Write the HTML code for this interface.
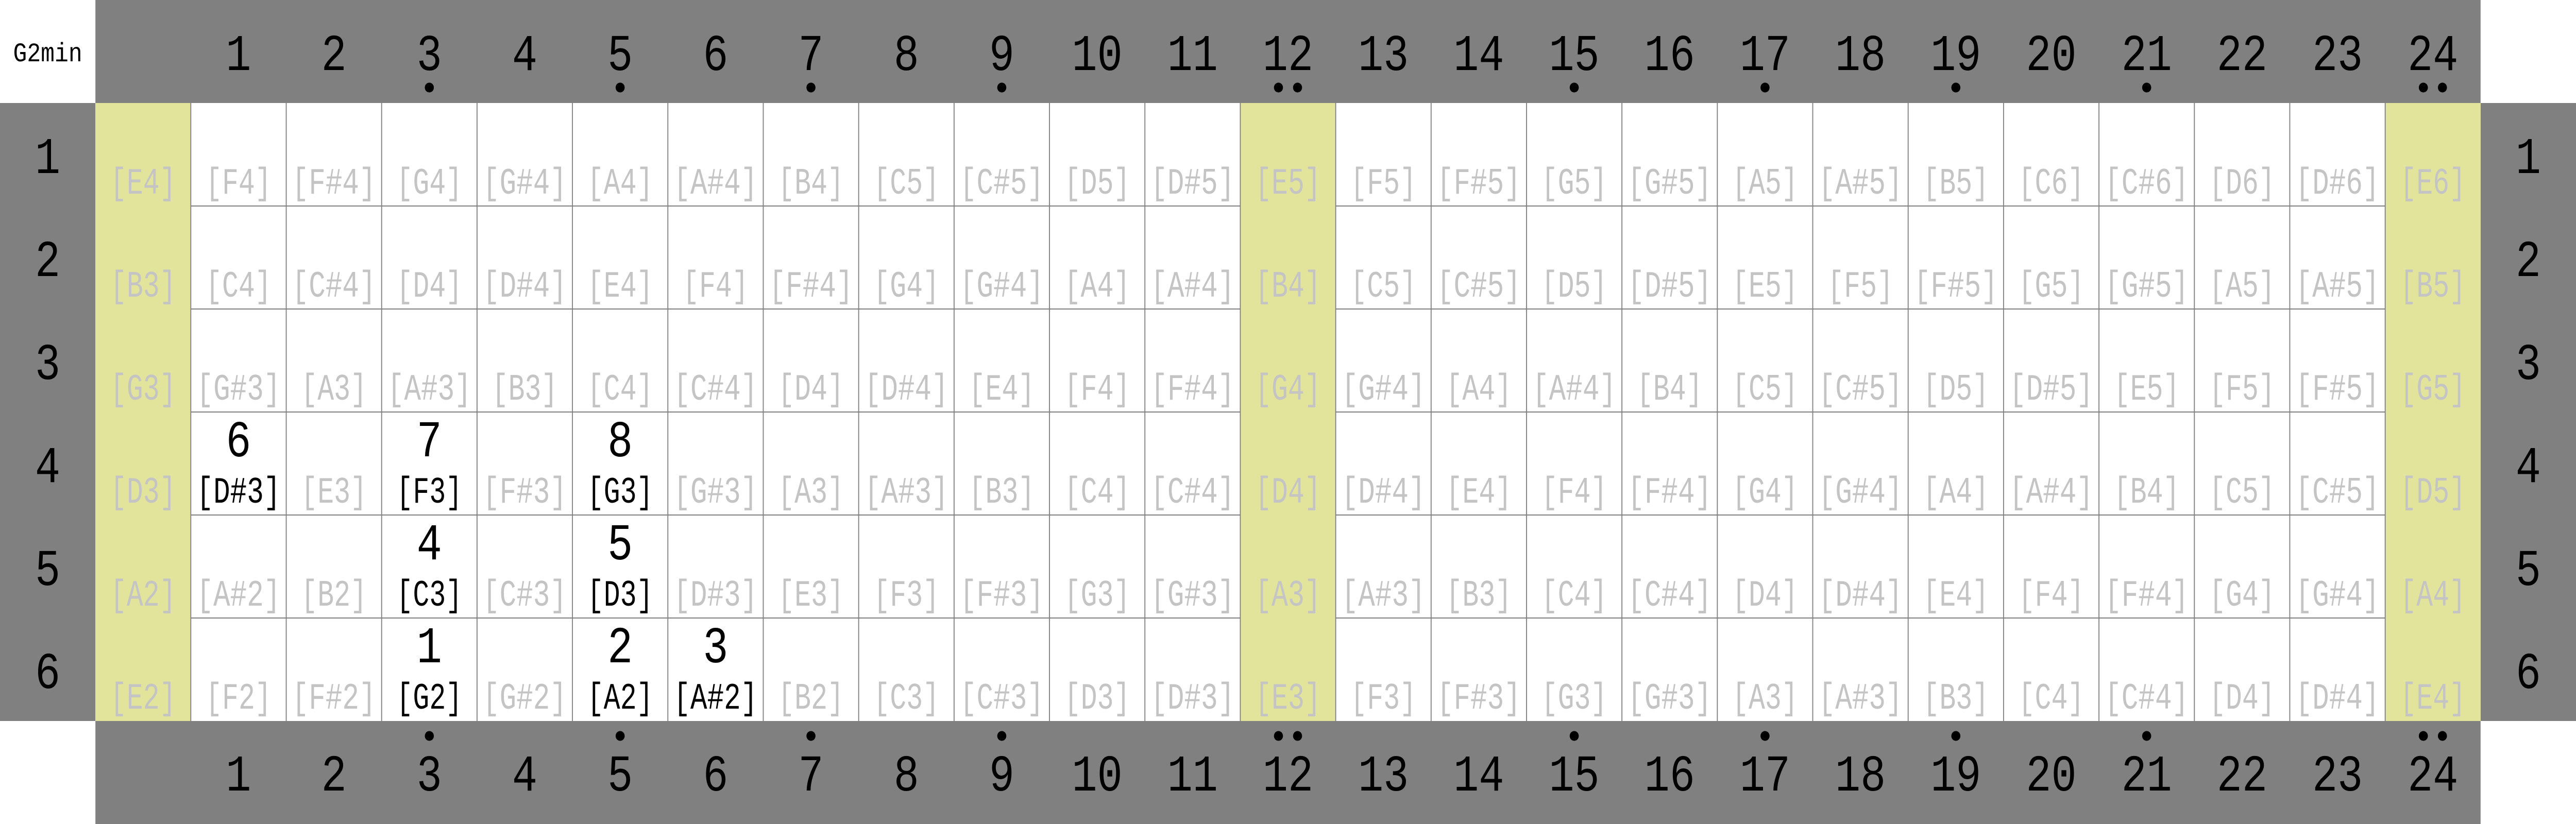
<!DOCTYPE html>
<html><head><meta charset="utf-8"><style>
html,body{margin:0;padding:0;width:100%;height:100%;overflow:hidden;background:#fff}
svg{display:block;width:100vw;height:100vh}
text{font-family:"Liberation Mono",monospace;text-anchor:middle}
.n{font-size:72px;fill:#c4c4c4}
.h{font-size:72px;fill:#000}
.b{font-size:100px;fill:#000}
.t{font-size:100px;fill:#000}
</style></head><body>
<svg viewBox="0 0 5400 1600" preserveAspectRatio="none" xmlns="http://www.w3.org/2000/svg">
<rect x="0" y="0" width="5400" height="1600" fill="#fff"/>
<rect x="200" y="0" width="5000" height="200" fill="#808080"/>
<rect x="200" y="1400" width="5000" height="200" fill="#808080"/>
<rect x="0" y="200" width="200" height="1200" fill="#808080"/>
<rect x="5200" y="200" width="200" height="1200" fill="#808080"/>
<rect x="200" y="200" width="200" height="1200" fill="#e3e49b"/>
<rect x="2600" y="200" width="200" height="1200" fill="#e3e49b"/>
<rect x="5000" y="200" width="200" height="1200" fill="#e3e49b"/>
<g stroke="#808080" stroke-width="2">
<path d="M400 400H2600M400 600H2600M400 800H2600M400 1000H2600M400 1200H2600M2800 400H5000M2800 600H5000M2800 800H5000M2800 1000H5000M2800 1200H5000"/>
<path d="M400 200V1400M600 200V1400M800 200V1400M1000 200V1400M1200 200V1400M1400 200V1400M1600 200V1400M1800 200V1400M2000 200V1400M2200 200V1400M2400 200V1400M2600 200V1400M2800 200V1400M3000 200V1400M3200 200V1400M3400 200V1400M3600 200V1400M3800 200V1400M4000 200V1400M4200 200V1400M4400 200V1400M4600 200V1400M4800 200V1400M5000 200V1400"/>
</g>
<text x="100" y="119" style="font-size:52px" textLength="145" lengthAdjust="spacingAndGlyphs">G2min</text>
<!-- top numbers -->
<g class="t">
<text class="t" x="500" y="136" textLength="53" lengthAdjust="spacingAndGlyphs">1</text>
<text class="t" x="700" y="136" textLength="53" lengthAdjust="spacingAndGlyphs">2</text>
<text class="t" x="900" y="136" textLength="53" lengthAdjust="spacingAndGlyphs">3</text>
<text class="t" x="1100" y="136" textLength="53" lengthAdjust="spacingAndGlyphs">4</text>
<text class="t" x="1300" y="136" textLength="53" lengthAdjust="spacingAndGlyphs">5</text>
<text class="t" x="1500" y="136" textLength="53" lengthAdjust="spacingAndGlyphs">6</text>
<text class="t" x="1700" y="136" textLength="53" lengthAdjust="spacingAndGlyphs">7</text>
<text class="t" x="1900" y="136" textLength="53" lengthAdjust="spacingAndGlyphs">8</text>
<text class="t" x="2100" y="136" textLength="53" lengthAdjust="spacingAndGlyphs">9</text>
<text class="t" x="2300" y="136" textLength="106" lengthAdjust="spacingAndGlyphs">10</text>
<text class="t" x="2500" y="136" textLength="106" lengthAdjust="spacingAndGlyphs">11</text>
<text class="t" x="2700" y="136" textLength="106" lengthAdjust="spacingAndGlyphs">12</text>
<text class="t" x="2900" y="136" textLength="106" lengthAdjust="spacingAndGlyphs">13</text>
<text class="t" x="3100" y="136" textLength="106" lengthAdjust="spacingAndGlyphs">14</text>
<text class="t" x="3300" y="136" textLength="106" lengthAdjust="spacingAndGlyphs">15</text>
<text class="t" x="3500" y="136" textLength="106" lengthAdjust="spacingAndGlyphs">16</text>
<text class="t" x="3700" y="136" textLength="106" lengthAdjust="spacingAndGlyphs">17</text>
<text class="t" x="3900" y="136" textLength="106" lengthAdjust="spacingAndGlyphs">18</text>
<text class="t" x="4100" y="136" textLength="106" lengthAdjust="spacingAndGlyphs">19</text>
<text class="t" x="4300" y="136" textLength="106" lengthAdjust="spacingAndGlyphs">20</text>
<text class="t" x="4500" y="136" textLength="106" lengthAdjust="spacingAndGlyphs">21</text>
<text class="t" x="4700" y="136" textLength="106" lengthAdjust="spacingAndGlyphs">22</text>
<text class="t" x="4900" y="136" textLength="106" lengthAdjust="spacingAndGlyphs">23</text>
<text class="t" x="5100" y="136" textLength="106" lengthAdjust="spacingAndGlyphs">24</text>
</g>
<!-- bottom numbers -->
<text class="t" x="500" y="1535" textLength="53" lengthAdjust="spacingAndGlyphs">1</text>
<text class="t" x="700" y="1535" textLength="53" lengthAdjust="spacingAndGlyphs">2</text>
<text class="t" x="900" y="1535" textLength="53" lengthAdjust="spacingAndGlyphs">3</text>
<text class="t" x="1100" y="1535" textLength="53" lengthAdjust="spacingAndGlyphs">4</text>
<text class="t" x="1300" y="1535" textLength="53" lengthAdjust="spacingAndGlyphs">5</text>
<text class="t" x="1500" y="1535" textLength="53" lengthAdjust="spacingAndGlyphs">6</text>
<text class="t" x="1700" y="1535" textLength="53" lengthAdjust="spacingAndGlyphs">7</text>
<text class="t" x="1900" y="1535" textLength="53" lengthAdjust="spacingAndGlyphs">8</text>
<text class="t" x="2100" y="1535" textLength="53" lengthAdjust="spacingAndGlyphs">9</text>
<text class="t" x="2300" y="1535" textLength="106" lengthAdjust="spacingAndGlyphs">10</text>
<text class="t" x="2500" y="1535" textLength="106" lengthAdjust="spacingAndGlyphs">11</text>
<text class="t" x="2700" y="1535" textLength="106" lengthAdjust="spacingAndGlyphs">12</text>
<text class="t" x="2900" y="1535" textLength="106" lengthAdjust="spacingAndGlyphs">13</text>
<text class="t" x="3100" y="1535" textLength="106" lengthAdjust="spacingAndGlyphs">14</text>
<text class="t" x="3300" y="1535" textLength="106" lengthAdjust="spacingAndGlyphs">15</text>
<text class="t" x="3500" y="1535" textLength="106" lengthAdjust="spacingAndGlyphs">16</text>
<text class="t" x="3700" y="1535" textLength="106" lengthAdjust="spacingAndGlyphs">17</text>
<text class="t" x="3900" y="1535" textLength="106" lengthAdjust="spacingAndGlyphs">18</text>
<text class="t" x="4100" y="1535" textLength="106" lengthAdjust="spacingAndGlyphs">19</text>
<text class="t" x="4300" y="1535" textLength="106" lengthAdjust="spacingAndGlyphs">20</text>
<text class="t" x="4500" y="1535" textLength="106" lengthAdjust="spacingAndGlyphs">21</text>
<text class="t" x="4700" y="1535" textLength="106" lengthAdjust="spacingAndGlyphs">22</text>
<text class="t" x="4900" y="1535" textLength="106" lengthAdjust="spacingAndGlyphs">23</text>
<text class="t" x="5100" y="1535" textLength="106" lengthAdjust="spacingAndGlyphs">24</text>
<!-- dots -->
<g fill="#000">
<circle cx="900" cy="170" r="9.5"/><circle cx="1300" cy="170" r="9.5"/><circle cx="1700" cy="170" r="9.5"/><circle cx="2100" cy="170" r="9.5"/>
<circle cx="2680" cy="170" r="9.5"/><circle cx="2720" cy="170" r="9.5"/>
<circle cx="3300" cy="170" r="9.5"/><circle cx="3700" cy="170" r="9.5"/><circle cx="4100" cy="170" r="9.5"/><circle cx="4500" cy="170" r="9.5"/>
<circle cx="5080" cy="170" r="9.5"/><circle cx="5120" cy="170" r="9.5"/>
<circle cx="900" cy="1429" r="9.5"/><circle cx="1300" cy="1429" r="9.5"/><circle cx="1700" cy="1429" r="9.5"/><circle cx="2100" cy="1429" r="9.5"/>
<circle cx="2680" cy="1429" r="9.5"/><circle cx="2720" cy="1429" r="9.5"/>
<circle cx="3300" cy="1429" r="9.5"/><circle cx="3700" cy="1429" r="9.5"/><circle cx="4100" cy="1429" r="9.5"/><circle cx="4500" cy="1429" r="9.5"/>
<circle cx="5080" cy="1429" r="9.5"/><circle cx="5120" cy="1429" r="9.5"/>
</g>
<!-- side numbers -->
<text class="t" x="100" y="336" textLength="53" lengthAdjust="spacingAndGlyphs">1</text>
<text class="t" x="100" y="536" textLength="53" lengthAdjust="spacingAndGlyphs">2</text>
<text class="t" x="100" y="736" textLength="53" lengthAdjust="spacingAndGlyphs">3</text>
<text class="t" x="100" y="936" textLength="53" lengthAdjust="spacingAndGlyphs">4</text>
<text class="t" x="100" y="1136" textLength="53" lengthAdjust="spacingAndGlyphs">5</text>
<text class="t" x="100" y="1336" textLength="53" lengthAdjust="spacingAndGlyphs">6</text>
<text class="t" x="5300" y="336" textLength="53" lengthAdjust="spacingAndGlyphs">1</text>
<text class="t" x="5300" y="536" textLength="53" lengthAdjust="spacingAndGlyphs">2</text>
<text class="t" x="5300" y="736" textLength="53" lengthAdjust="spacingAndGlyphs">3</text>
<text class="t" x="5300" y="936" textLength="53" lengthAdjust="spacingAndGlyphs">4</text>
<text class="t" x="5300" y="1136" textLength="53" lengthAdjust="spacingAndGlyphs">5</text>
<text class="t" x="5300" y="1336" textLength="53" lengthAdjust="spacingAndGlyphs">6</text>
<!-- row 1 -->
<text class="n" x="300" y="376" textLength="138" lengthAdjust="spacingAndGlyphs">[E4]</text>
<text class="n" x="500" y="376" textLength="138" lengthAdjust="spacingAndGlyphs">[F4]</text>
<text class="n" x="700" y="376" textLength="176" lengthAdjust="spacingAndGlyphs">[F#4]</text>
<text class="n" x="900" y="376" textLength="138" lengthAdjust="spacingAndGlyphs">[G4]</text>
<text class="n" x="1100" y="376" textLength="176" lengthAdjust="spacingAndGlyphs">[G#4]</text>
<text class="n" x="1300" y="376" textLength="138" lengthAdjust="spacingAndGlyphs">[A4]</text>
<text class="n" x="1500" y="376" textLength="176" lengthAdjust="spacingAndGlyphs">[A#4]</text>
<text class="n" x="1700" y="376" textLength="138" lengthAdjust="spacingAndGlyphs">[B4]</text>
<text class="n" x="1900" y="376" textLength="138" lengthAdjust="spacingAndGlyphs">[C5]</text>
<text class="n" x="2100" y="376" textLength="176" lengthAdjust="spacingAndGlyphs">[C#5]</text>
<text class="n" x="2300" y="376" textLength="138" lengthAdjust="spacingAndGlyphs">[D5]</text>
<text class="n" x="2500" y="376" textLength="176" lengthAdjust="spacingAndGlyphs">[D#5]</text>
<text class="n" x="2700" y="376" textLength="138" lengthAdjust="spacingAndGlyphs">[E5]</text>
<text class="n" x="2900" y="376" textLength="138" lengthAdjust="spacingAndGlyphs">[F5]</text>
<text class="n" x="3100" y="376" textLength="176" lengthAdjust="spacingAndGlyphs">[F#5]</text>
<text class="n" x="3300" y="376" textLength="138" lengthAdjust="spacingAndGlyphs">[G5]</text>
<text class="n" x="3500" y="376" textLength="176" lengthAdjust="spacingAndGlyphs">[G#5]</text>
<text class="n" x="3700" y="376" textLength="138" lengthAdjust="spacingAndGlyphs">[A5]</text>
<text class="n" x="3900" y="376" textLength="176" lengthAdjust="spacingAndGlyphs">[A#5]</text>
<text class="n" x="4100" y="376" textLength="138" lengthAdjust="spacingAndGlyphs">[B5]</text>
<text class="n" x="4300" y="376" textLength="138" lengthAdjust="spacingAndGlyphs">[C6]</text>
<text class="n" x="4500" y="376" textLength="176" lengthAdjust="spacingAndGlyphs">[C#6]</text>
<text class="n" x="4700" y="376" textLength="138" lengthAdjust="spacingAndGlyphs">[D6]</text>
<text class="n" x="4900" y="376" textLength="176" lengthAdjust="spacingAndGlyphs">[D#6]</text>
<text class="n" x="5100" y="376" textLength="138" lengthAdjust="spacingAndGlyphs">[E6]</text>
<!-- row 2 -->
<text class="n" x="300" y="576" textLength="138" lengthAdjust="spacingAndGlyphs">[B3]</text>
<text class="n" x="500" y="576" textLength="138" lengthAdjust="spacingAndGlyphs">[C4]</text>
<text class="n" x="700" y="576" textLength="176" lengthAdjust="spacingAndGlyphs">[C#4]</text>
<text class="n" x="900" y="576" textLength="138" lengthAdjust="spacingAndGlyphs">[D4]</text>
<text class="n" x="1100" y="576" textLength="176" lengthAdjust="spacingAndGlyphs">[D#4]</text>
<text class="n" x="1300" y="576" textLength="138" lengthAdjust="spacingAndGlyphs">[E4]</text>
<text class="n" x="1500" y="576" textLength="138" lengthAdjust="spacingAndGlyphs">[F4]</text>
<text class="n" x="1700" y="576" textLength="176" lengthAdjust="spacingAndGlyphs">[F#4]</text>
<text class="n" x="1900" y="576" textLength="138" lengthAdjust="spacingAndGlyphs">[G4]</text>
<text class="n" x="2100" y="576" textLength="176" lengthAdjust="spacingAndGlyphs">[G#4]</text>
<text class="n" x="2300" y="576" textLength="138" lengthAdjust="spacingAndGlyphs">[A4]</text>
<text class="n" x="2500" y="576" textLength="176" lengthAdjust="spacingAndGlyphs">[A#4]</text>
<text class="n" x="2700" y="576" textLength="138" lengthAdjust="spacingAndGlyphs">[B4]</text>
<text class="n" x="2900" y="576" textLength="138" lengthAdjust="spacingAndGlyphs">[C5]</text>
<text class="n" x="3100" y="576" textLength="176" lengthAdjust="spacingAndGlyphs">[C#5]</text>
<text class="n" x="3300" y="576" textLength="138" lengthAdjust="spacingAndGlyphs">[D5]</text>
<text class="n" x="3500" y="576" textLength="176" lengthAdjust="spacingAndGlyphs">[D#5]</text>
<text class="n" x="3700" y="576" textLength="138" lengthAdjust="spacingAndGlyphs">[E5]</text>
<text class="n" x="3900" y="576" textLength="138" lengthAdjust="spacingAndGlyphs">[F5]</text>
<text class="n" x="4100" y="576" textLength="176" lengthAdjust="spacingAndGlyphs">[F#5]</text>
<text class="n" x="4300" y="576" textLength="138" lengthAdjust="spacingAndGlyphs">[G5]</text>
<text class="n" x="4500" y="576" textLength="176" lengthAdjust="spacingAndGlyphs">[G#5]</text>
<text class="n" x="4700" y="576" textLength="138" lengthAdjust="spacingAndGlyphs">[A5]</text>
<text class="n" x="4900" y="576" textLength="176" lengthAdjust="spacingAndGlyphs">[A#5]</text>
<text class="n" x="5100" y="576" textLength="138" lengthAdjust="spacingAndGlyphs">[B5]</text>
<!-- row 3 -->
<text class="n" x="300" y="776" textLength="138" lengthAdjust="spacingAndGlyphs">[G3]</text>
<text class="n" x="500" y="776" textLength="176" lengthAdjust="spacingAndGlyphs">[G#3]</text>
<text class="n" x="700" y="776" textLength="138" lengthAdjust="spacingAndGlyphs">[A3]</text>
<text class="n" x="900" y="776" textLength="176" lengthAdjust="spacingAndGlyphs">[A#3]</text>
<text class="n" x="1100" y="776" textLength="138" lengthAdjust="spacingAndGlyphs">[B3]</text>
<text class="n" x="1300" y="776" textLength="138" lengthAdjust="spacingAndGlyphs">[C4]</text>
<text class="n" x="1500" y="776" textLength="176" lengthAdjust="spacingAndGlyphs">[C#4]</text>
<text class="n" x="1700" y="776" textLength="138" lengthAdjust="spacingAndGlyphs">[D4]</text>
<text class="n" x="1900" y="776" textLength="176" lengthAdjust="spacingAndGlyphs">[D#4]</text>
<text class="n" x="2100" y="776" textLength="138" lengthAdjust="spacingAndGlyphs">[E4]</text>
<text class="n" x="2300" y="776" textLength="138" lengthAdjust="spacingAndGlyphs">[F4]</text>
<text class="n" x="2500" y="776" textLength="176" lengthAdjust="spacingAndGlyphs">[F#4]</text>
<text class="n" x="2700" y="776" textLength="138" lengthAdjust="spacingAndGlyphs">[G4]</text>
<text class="n" x="2900" y="776" textLength="176" lengthAdjust="spacingAndGlyphs">[G#4]</text>
<text class="n" x="3100" y="776" textLength="138" lengthAdjust="spacingAndGlyphs">[A4]</text>
<text class="n" x="3300" y="776" textLength="176" lengthAdjust="spacingAndGlyphs">[A#4]</text>
<text class="n" x="3500" y="776" textLength="138" lengthAdjust="spacingAndGlyphs">[B4]</text>
<text class="n" x="3700" y="776" textLength="138" lengthAdjust="spacingAndGlyphs">[C5]</text>
<text class="n" x="3900" y="776" textLength="176" lengthAdjust="spacingAndGlyphs">[C#5]</text>
<text class="n" x="4100" y="776" textLength="138" lengthAdjust="spacingAndGlyphs">[D5]</text>
<text class="n" x="4300" y="776" textLength="176" lengthAdjust="spacingAndGlyphs">[D#5]</text>
<text class="n" x="4500" y="776" textLength="138" lengthAdjust="spacingAndGlyphs">[E5]</text>
<text class="n" x="4700" y="776" textLength="138" lengthAdjust="spacingAndGlyphs">[F5]</text>
<text class="n" x="4900" y="776" textLength="176" lengthAdjust="spacingAndGlyphs">[F#5]</text>
<text class="n" x="5100" y="776" textLength="138" lengthAdjust="spacingAndGlyphs">[G5]</text>
<!-- row 4 -->
<text class="n" x="300" y="976" textLength="138" lengthAdjust="spacingAndGlyphs">[D3]</text>
<text class="b" x="500" y="886" textLength="53" lengthAdjust="spacingAndGlyphs">6</text>
<text class="h" x="500" y="976" textLength="176" lengthAdjust="spacingAndGlyphs">[D#3]</text>
<text class="n" x="700" y="976" textLength="138" lengthAdjust="spacingAndGlyphs">[E3]</text>
<text class="b" x="900" y="886" textLength="53" lengthAdjust="spacingAndGlyphs">7</text>
<text class="h" x="900" y="976" textLength="138" lengthAdjust="spacingAndGlyphs">[F3]</text>
<text class="n" x="1100" y="976" textLength="176" lengthAdjust="spacingAndGlyphs">[F#3]</text>
<text class="b" x="1300" y="886" textLength="53" lengthAdjust="spacingAndGlyphs">8</text>
<text class="h" x="1300" y="976" textLength="138" lengthAdjust="spacingAndGlyphs">[G3]</text>
<text class="n" x="1500" y="976" textLength="176" lengthAdjust="spacingAndGlyphs">[G#3]</text>
<text class="n" x="1700" y="976" textLength="138" lengthAdjust="spacingAndGlyphs">[A3]</text>
<text class="n" x="1900" y="976" textLength="176" lengthAdjust="spacingAndGlyphs">[A#3]</text>
<text class="n" x="2100" y="976" textLength="138" lengthAdjust="spacingAndGlyphs">[B3]</text>
<text class="n" x="2300" y="976" textLength="138" lengthAdjust="spacingAndGlyphs">[C4]</text>
<text class="n" x="2500" y="976" textLength="176" lengthAdjust="spacingAndGlyphs">[C#4]</text>
<text class="n" x="2700" y="976" textLength="138" lengthAdjust="spacingAndGlyphs">[D4]</text>
<text class="n" x="2900" y="976" textLength="176" lengthAdjust="spacingAndGlyphs">[D#4]</text>
<text class="n" x="3100" y="976" textLength="138" lengthAdjust="spacingAndGlyphs">[E4]</text>
<text class="n" x="3300" y="976" textLength="138" lengthAdjust="spacingAndGlyphs">[F4]</text>
<text class="n" x="3500" y="976" textLength="176" lengthAdjust="spacingAndGlyphs">[F#4]</text>
<text class="n" x="3700" y="976" textLength="138" lengthAdjust="spacingAndGlyphs">[G4]</text>
<text class="n" x="3900" y="976" textLength="176" lengthAdjust="spacingAndGlyphs">[G#4]</text>
<text class="n" x="4100" y="976" textLength="138" lengthAdjust="spacingAndGlyphs">[A4]</text>
<text class="n" x="4300" y="976" textLength="176" lengthAdjust="spacingAndGlyphs">[A#4]</text>
<text class="n" x="4500" y="976" textLength="138" lengthAdjust="spacingAndGlyphs">[B4]</text>
<text class="n" x="4700" y="976" textLength="138" lengthAdjust="spacingAndGlyphs">[C5]</text>
<text class="n" x="4900" y="976" textLength="176" lengthAdjust="spacingAndGlyphs">[C#5]</text>
<text class="n" x="5100" y="976" textLength="138" lengthAdjust="spacingAndGlyphs">[D5]</text>
<!-- row 5 -->
<text class="n" x="300" y="1176" textLength="138" lengthAdjust="spacingAndGlyphs">[A2]</text>
<text class="n" x="500" y="1176" textLength="176" lengthAdjust="spacingAndGlyphs">[A#2]</text>
<text class="n" x="700" y="1176" textLength="138" lengthAdjust="spacingAndGlyphs">[B2]</text>
<text class="b" x="900" y="1086" textLength="53" lengthAdjust="spacingAndGlyphs">4</text>
<text class="h" x="900" y="1176" textLength="138" lengthAdjust="spacingAndGlyphs">[C3]</text>
<text class="n" x="1100" y="1176" textLength="176" lengthAdjust="spacingAndGlyphs">[C#3]</text>
<text class="b" x="1300" y="1086" textLength="53" lengthAdjust="spacingAndGlyphs">5</text>
<text class="h" x="1300" y="1176" textLength="138" lengthAdjust="spacingAndGlyphs">[D3]</text>
<text class="n" x="1500" y="1176" textLength="176" lengthAdjust="spacingAndGlyphs">[D#3]</text>
<text class="n" x="1700" y="1176" textLength="138" lengthAdjust="spacingAndGlyphs">[E3]</text>
<text class="n" x="1900" y="1176" textLength="138" lengthAdjust="spacingAndGlyphs">[F3]</text>
<text class="n" x="2100" y="1176" textLength="176" lengthAdjust="spacingAndGlyphs">[F#3]</text>
<text class="n" x="2300" y="1176" textLength="138" lengthAdjust="spacingAndGlyphs">[G3]</text>
<text class="n" x="2500" y="1176" textLength="176" lengthAdjust="spacingAndGlyphs">[G#3]</text>
<text class="n" x="2700" y="1176" textLength="138" lengthAdjust="spacingAndGlyphs">[A3]</text>
<text class="n" x="2900" y="1176" textLength="176" lengthAdjust="spacingAndGlyphs">[A#3]</text>
<text class="n" x="3100" y="1176" textLength="138" lengthAdjust="spacingAndGlyphs">[B3]</text>
<text class="n" x="3300" y="1176" textLength="138" lengthAdjust="spacingAndGlyphs">[C4]</text>
<text class="n" x="3500" y="1176" textLength="176" lengthAdjust="spacingAndGlyphs">[C#4]</text>
<text class="n" x="3700" y="1176" textLength="138" lengthAdjust="spacingAndGlyphs">[D4]</text>
<text class="n" x="3900" y="1176" textLength="176" lengthAdjust="spacingAndGlyphs">[D#4]</text>
<text class="n" x="4100" y="1176" textLength="138" lengthAdjust="spacingAndGlyphs">[E4]</text>
<text class="n" x="4300" y="1176" textLength="138" lengthAdjust="spacingAndGlyphs">[F4]</text>
<text class="n" x="4500" y="1176" textLength="176" lengthAdjust="spacingAndGlyphs">[F#4]</text>
<text class="n" x="4700" y="1176" textLength="138" lengthAdjust="spacingAndGlyphs">[G4]</text>
<text class="n" x="4900" y="1176" textLength="176" lengthAdjust="spacingAndGlyphs">[G#4]</text>
<text class="n" x="5100" y="1176" textLength="138" lengthAdjust="spacingAndGlyphs">[A4]</text>
<!-- row 6 -->
<text class="n" x="300" y="1376" textLength="138" lengthAdjust="spacingAndGlyphs">[E2]</text>
<text class="n" x="500" y="1376" textLength="138" lengthAdjust="spacingAndGlyphs">[F2]</text>
<text class="n" x="700" y="1376" textLength="176" lengthAdjust="spacingAndGlyphs">[F#2]</text>
<text class="b" x="900" y="1286" textLength="53" lengthAdjust="spacingAndGlyphs">1</text>
<text class="h" x="900" y="1376" textLength="138" lengthAdjust="spacingAndGlyphs">[G2]</text>
<text class="n" x="1100" y="1376" textLength="176" lengthAdjust="spacingAndGlyphs">[G#2]</text>
<text class="b" x="1300" y="1286" textLength="53" lengthAdjust="spacingAndGlyphs">2</text>
<text class="h" x="1300" y="1376" textLength="138" lengthAdjust="spacingAndGlyphs">[A2]</text>
<text class="b" x="1500" y="1286" textLength="53" lengthAdjust="spacingAndGlyphs">3</text>
<text class="h" x="1500" y="1376" textLength="176" lengthAdjust="spacingAndGlyphs">[A#2]</text>
<text class="n" x="1700" y="1376" textLength="138" lengthAdjust="spacingAndGlyphs">[B2]</text>
<text class="n" x="1900" y="1376" textLength="138" lengthAdjust="spacingAndGlyphs">[C3]</text>
<text class="n" x="2100" y="1376" textLength="176" lengthAdjust="spacingAndGlyphs">[C#3]</text>
<text class="n" x="2300" y="1376" textLength="138" lengthAdjust="spacingAndGlyphs">[D3]</text>
<text class="n" x="2500" y="1376" textLength="176" lengthAdjust="spacingAndGlyphs">[D#3]</text>
<text class="n" x="2700" y="1376" textLength="138" lengthAdjust="spacingAndGlyphs">[E3]</text>
<text class="n" x="2900" y="1376" textLength="138" lengthAdjust="spacingAndGlyphs">[F3]</text>
<text class="n" x="3100" y="1376" textLength="176" lengthAdjust="spacingAndGlyphs">[F#3]</text>
<text class="n" x="3300" y="1376" textLength="138" lengthAdjust="spacingAndGlyphs">[G3]</text>
<text class="n" x="3500" y="1376" textLength="176" lengthAdjust="spacingAndGlyphs">[G#3]</text>
<text class="n" x="3700" y="1376" textLength="138" lengthAdjust="spacingAndGlyphs">[A3]</text>
<text class="n" x="3900" y="1376" textLength="176" lengthAdjust="spacingAndGlyphs">[A#3]</text>
<text class="n" x="4100" y="1376" textLength="138" lengthAdjust="spacingAndGlyphs">[B3]</text>
<text class="n" x="4300" y="1376" textLength="138" lengthAdjust="spacingAndGlyphs">[C4]</text>
<text class="n" x="4500" y="1376" textLength="176" lengthAdjust="spacingAndGlyphs">[C#4]</text>
<text class="n" x="4700" y="1376" textLength="138" lengthAdjust="spacingAndGlyphs">[D4]</text>
<text class="n" x="4900" y="1376" textLength="176" lengthAdjust="spacingAndGlyphs">[D#4]</text>
<text class="n" x="5100" y="1376" textLength="138" lengthAdjust="spacingAndGlyphs">[E4]</text>
</svg>
</body></html>
